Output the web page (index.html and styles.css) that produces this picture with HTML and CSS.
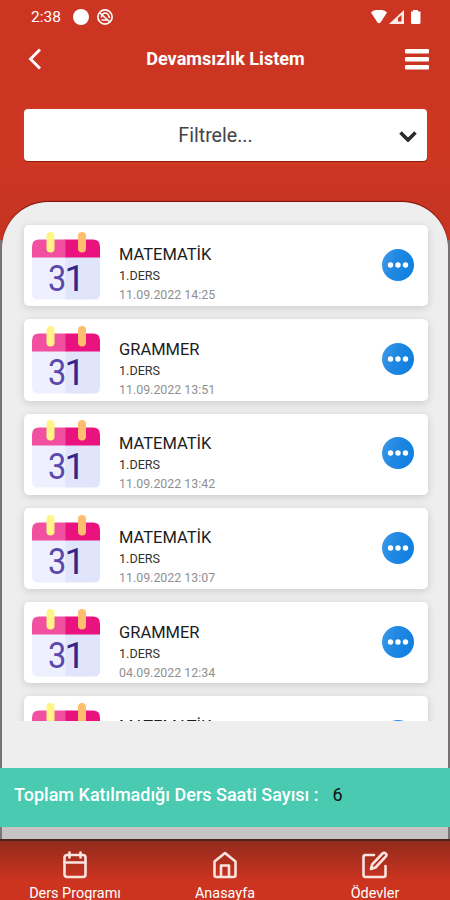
FILE: index.html
```html
<!DOCTYPE html>
<html lang="tr">
<head>
  <meta charset="UTF-8">
  <meta name="viewport" content="width=device-width, initial-scale=1">
  <title>Devamsızlık Listem</title>
  <link rel="stylesheet" href="styles.css">
</head>
<body>

<!-- shared icons -->
<svg class="defs" width="0" height="0">
  <defs>
    <linearGradient id="blue" x1="0" x2="1" y1="0" y2="0.3">
      <stop offset="0" stop-color="#409be8"/>
      <stop offset="0.5" stop-color="#2088e2"/>
      <stop offset="1" stop-color="#1180e0"/>
    </linearGradient>
  </defs>
  <symbol id="calendar" viewBox="0 0 68 68">
    <path d="M0 25h34v42.500H6q-6 0-6-6z" fill="#eeefff"/>
    <path d="M33.500 25H68v36.500q0 6-6 6H33.500z" fill="#e0e5fb"/>
    <path d="M0 25.500v-11q0-7 7-7h27v18z" fill="#f0509f"/>
    <path d="M68 25.500v-11q0-7-7-7H33.500v18z" fill="#e9127e"/>
    <rect x="14.500" y="0" width="8" height="20.500" rx="4" fill="#fff485"/>
    <rect x="46" y="0" width="8" height="20.500" rx="4" fill="#ffbd70"/>
    <text transform="translate(16 58.500) scale(.88 1)" fill="#5a4aad">3</text>
    <text transform="translate(32.500 58.500)" fill="#35248a">1</text>
  </symbol>
  <symbol id="more" viewBox="0 0 32 32">
    <circle cx="16" cy="16" r="16" fill="url(#blue)"/>
    <circle cx="8.500" cy="16" r="2.700" fill="#fff"/>
    <circle cx="16" cy="16" r="2.700" fill="#fff"/>
    <circle cx="23.500" cy="16" r="2.700" fill="#fff"/>
  </symbol>
</svg>

<header class="header">
  <div class="status">
    <span class="clock">2:38</span>
    <svg class="dot" width="16" height="16" viewBox="0 0 16 16"><circle cx="8" cy="8" r="8" fill="#fff"/></svg>
    <svg width="16" height="16" viewBox="0 0 16 16" fill="none" stroke="#fff">
      <circle cx="8" cy="8" r="7.100" stroke-width="1.700"/>
      <path d="M3 4l10 9M4.500 8.500C4 5 7 3.500 9.500 4.200S12 8 12.500 9M4.500 11h5.500" stroke-width="1.600"/>
    </svg>
    <svg class="signals" width="50" height="16" viewBox="0 0 50 16">
      <path d="M0 3.500Q2 1 5 1h6q3 0 5 2.500L9.500 13.500q-1.500 1.500-3 0z" fill="#fff"/>
      <path d="M18 15L33 1v14z" fill="#fff" fill-opacity=".9"/>
      <path d="M27 12.500V9l3.500-3v6.500z" fill="#cd3523"/>
      <path d="M42 1h5v1.500h2.500v11q0 1.500-1.500 1.500h-6.500q-1.500 0-1.500-1.500v-11h2z" fill="#fff"/>
    </svg>
  </div>

  <div class="topbar">
    <svg width="14" height="22" viewBox="0 0 14 22" fill="none" stroke="#fff" stroke-width="2.900"><path d="M12 1.500L2.500 11l9.500 9.500"/></svg>
    <h1 class="title">Devamsızlık Listem</h1>
    <svg width="24" height="21" viewBox="0 0 24 21" fill="#fff">
      <rect width="24" height="4.500" rx="1"/><rect y="8" width="24" height="4.500" rx="1"/><rect y="16" width="24" height="4.500" rx="1"/>
    </svg>
  </div>

  <div class="filter">
    <span class="filter-text">Filtrele...</span>
    <svg width="18" height="12" viewBox="0 0 18 12" fill="none" stroke="#2b2b2b" stroke-width="3.600"><path d="M1.500 2.500L9 10l7.500-7.500"/></svg>
  </div>
</header>

<main class="sheet">
  <div class="list">
    <div class="card">
      <svg class="card-icon"><use href="#calendar"/></svg>
      <div class="card-text">
        <div class="lesson">MATEMATİK</div>
        <div class="hour">1.DERS</div>
        <div class="date">11.09.2022 14:25</div>
      </div>
      <svg class="more"><use href="#more"/></svg>
    </div>
    <div class="card">
      <svg class="card-icon"><use href="#calendar"/></svg>
      <div class="card-text">
        <div class="lesson">GRAMMER</div>
        <div class="hour">1.DERS</div>
        <div class="date">11.09.2022 13:51</div>
      </div>
      <svg class="more"><use href="#more"/></svg>
    </div>
    <div class="card">
      <svg class="card-icon"><use href="#calendar"/></svg>
      <div class="card-text">
        <div class="lesson">MATEMATİK</div>
        <div class="hour">1.DERS</div>
        <div class="date">11.09.2022 13:42</div>
      </div>
      <svg class="more"><use href="#more"/></svg>
    </div>
    <div class="card">
      <svg class="card-icon"><use href="#calendar"/></svg>
      <div class="card-text">
        <div class="lesson">MATEMATİK</div>
        <div class="hour">1.DERS</div>
        <div class="date">11.09.2022 13:07</div>
      </div>
      <svg class="more"><use href="#more"/></svg>
    </div>
    <div class="card">
      <svg class="card-icon"><use href="#calendar"/></svg>
      <div class="card-text">
        <div class="lesson">GRAMMER</div>
        <div class="hour">1.DERS</div>
        <div class="date">04.09.2022 12:34</div>
      </div>
      <svg class="more"><use href="#more"/></svg>
    </div>
    <div class="card">
      <svg class="card-icon"><use href="#calendar"/></svg>
      <div class="card-text">
        <div class="lesson">MATEMATİK</div>
      </div>
      <svg class="more"><use href="#more"/></svg>
    </div>
  </div>
</main>

<div class="total">
  <span>Toplam Katılmadığı Ders Saati Sayısı :</span>
  <span class="total-count">6</span>
</div>
<div class="strip"></div>

<nav class="nav">
  <div class="nav-item">
    <svg width="26" height="28" viewBox="0 0 26 28" fill="none" stroke="#fbe4e0" stroke-width="2.600" stroke-linecap="round" stroke-linejoin="round">
      <rect x="2.500" y="4" width="21" height="22" rx="2.500"/><path d="M2.500 11.500h21M7.500 1.500v5M18.500 1.500v5"/>
    </svg>
    <span>Ders Programı</span>
  </div>
  <div class="nav-item">
    <svg width="26" height="28" viewBox="0 0 26 28" fill="none" stroke="#fbe4e0" stroke-width="2.600" stroke-linecap="round" stroke-linejoin="round">
      <path d="M2.500 10.500L13 2l10.500 8.500V24q0 2-2 2h-17q-2 0-2-2zM9 26V14.500h8V26"/>
    </svg>
    <span>Anasayfa</span>
  </div>
  <div class="nav-item">
    <svg width="26" height="28" viewBox="0 0 26 28" fill="none" stroke="#fbe4e0" stroke-width="2.600" stroke-linecap="round" stroke-linejoin="round">
      <path d="M12 4H3.500Q1.500 4 1.500 6v18q0 2 2 2h18q2 0 2-2v-9"/>
      <path d="M20.500 2.500q1.500-1.500 3.200 0t0 3.200L13.500 16.500l-4.500 1.500 1.200-4.700z"/>
    </svg>
    <span>Ödevler</span>
  </div>
</nav>

</body>
</html>
```
FILE: styles.css
```css
* {
  box-sizing: border-box;
}

body {
  margin: 0;
  width: 450px;
  height: 900px;
  overflow: hidden;
  display: flex;
  flex-direction: column;
  background: #777;
  font-family: Roboto, "Liberation Sans", sans-serif;
}

svg {
  display: block;
  flex: none;
}

.defs {
  position: absolute;
}

/* header */
.header {
  flex: none;
  height: 240px;
  background: linear-gradient(#cd3523 70%, #c63622 86%, #c93320);
  color: #fff;
}

.status {
  display: flex;
  align-items: center;
  height: 33px;
  padding: 0 29px 0 31px;
}

.clock {
  width: 42px;
  font-size: 15.5px;
}

.dot {
  margin-right: 8px;
}

.signals {
  margin-left: auto;
}

.topbar {
  display: flex;
  align-items: center;
  justify-content: space-between;
  height: 52px;
  padding: 0 21px 0 28px;
}

.title {
  margin: 0;
  padding: 0 0 1px 4px;
  font-size: 18.1px;
  font-weight: bold;
}

.filter {
  display: flex;
  align-items: center;
  height: 52px;
  margin: 24px 23px 0 24px;
  padding: 1px 10px 0 8px;
  border-radius: 4px;
  background: #fff;
  box-shadow: 0 1px 1px #8c1a0c, 0 1px 9px rgba(225, 90, 50, 0.45);
}

.filter-text {
  flex: 1;
  text-align: center;
  font-size: 19.6px;
  color: #444;
}

/* list */
.sheet {
  flex: none;
  height: 566px;
  margin: -38px 2px 0;
  padding: 14px 12px 0;
  border-radius: 46px 46px 0 0;
  background: #eee;
  box-shadow: 0 -1px 1px #7c1207;
}

.list {
  display: flex;
  flex-direction: column;
  gap: 13px;
  height: 505px;
  padding: 9px 8px 0 10px;
  overflow: hidden;
}

.card {
  flex: none;
  display: flex;
  align-items: center;
  height: 81.3px;
  padding: 0 14px 0 8px;
  border-radius: 5px;
  background: #fff;
  box-shadow: 0 2px 8px rgba(0, 0, 0, 0.15);
}

.card-icon {
  width: 68px;
  height: 68px;
  font-size: 37px;
}

.card-text {
  flex: 1;
  align-self: flex-start;
  padding: 19.4px 0 0 19px;
}

.lesson {
  font-size: 16.5px;
  line-height: 22px;
  color: #1c1c1c;
}

.hour {
  font-size: 12.6px;
  line-height: 20px;
  color: #333;
}

.date {
  font-size: 12.4px;
  line-height: 18px;
  color: #909090;
}

.more {
  width: 32px;
  height: 32px;
  margin-bottom: 2px;
}

/* total */
.total {
  flex: none;
  display: flex;
  gap: 14px;
  height: 59px;
  padding: 16px 14px 0;
  background: #49cab1;
  color: #fff;
  font-size: 18px;
  font-weight: 500;
  line-height: 22px;
}

.total-count {
  color: #111;
  font-weight: 400;
}

.strip {
  flex: none;
  height: 12px;
  margin: 0 2px;
  background: #c4c4c4;
}

/* bottom menu */
.nav {
  flex: 1;
  display: flex;
  border-top: 2px solid #4c251f;
  background: linear-gradient(#932b1c, #cc3420 65%);
  color: #fff;
}

.nav-item {
  flex: 1;
  display: flex;
  flex-direction: column;
  align-items: center;
  gap: 6px;
  padding-top: 10px;
  font-size: 14.4px;
  line-height: 18px;
}
```
